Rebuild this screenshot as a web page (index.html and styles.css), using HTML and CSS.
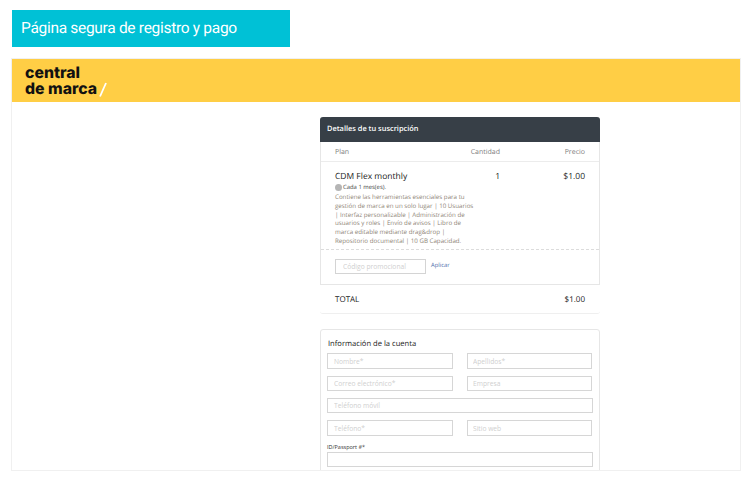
FILE: index.html
```html
<!DOCTYPE html>
<html lang="es">
<head>
<meta charset="utf-8">
<title>Página segura de registro y pago</title>
<link rel="stylesheet" href="styles.css">
</head>
<body>
<h1 class="banner">Página segura de registro y pago</h1>
<div class="shell">
  <header class="brand">
    <div class="logo">central<br>de marca<svg class="slash" viewBox="0 0 8 15" width="8" height="15" aria-hidden="true"><path d="M1 14.5 L7 1" stroke="#fff" stroke-width="1.8" fill="none"/></svg></div>
  </header>
  <main class="content">
    <section class="card summary">
      <h2 class="card-head">Detalles de tu suscripción</h2>
      <div class="row labels">
        <span class="col-plan">Plan</span>
        <span class="col-qty">Cantidad</span>
        <span class="col-price">Precio</span>
      </div>
      <div class="row item">
        <div class="col-plan">
          <div class="plan-name">CDM Flex monthly</div>
          <div class="cycle"><span class="dot"></span>Cada 1 mes(es).</div>
          <p class="desc">Contiene las herramientas esenciales para tu gestión de marca en un solo lugar | 10 Usuarios | Interfaz personalizable | Administración de usuarios y roles | Envío de avisos | Libro de marca editable mediante drag&amp;drop | Repositorio documental | 10 GB Capacidad.</p>
        </div>
        <div class="col-qty qty-val">1</div>
        <div class="col-price price-val">$1.00</div>
      </div>
      <div class="promo">
        <input class="promo-input" placeholder="Código promocional">
        <a class="apply" href="#">Aplicar</a>
      </div>
    </section>
    <div class="total">
      <span>TOTAL</span>
      <span>$1.00</span>
    </div>
    <section class="card account">
      <h3 class="account-title">Información de la cuenta</h3>
      <div class="fields">
        <div class="pair">
          <input class="field" placeholder="Nombre*">
          <input class="field" placeholder="Apellidos*">
        </div>
        <div class="pair">
          <input class="field short" placeholder="Correo electrónico*">
          <input class="field short" placeholder="Empresa">
        </div>
        <input class="field wide short" placeholder="Teléfono móvil">
        <div class="pair">
          <input class="field" placeholder="Teléfono*">
          <input class="field" placeholder="Sitio web">
        </div>
        <div>
          <label class="id-label" for="id-pass">ID/Passport #*</label>
          <input class="field wide short" id="id-pass">
        </div>
      </div>
    </section>
  </main>
</div>
</body>
</html>
```
FILE: styles.css
```css
* { box-sizing: border-box; }
html, body { margin: 0; height: 100%; overflow: hidden; background: #fff; }
body {
  padding: 10px 0 0 11px;
  font-family: "Open Sans", sans-serif;
  color: #222;
  text-rendering: geometricPrecision;
}

.banner {
  margin: 0 0 11px 1px;
  width: 278px;
  height: 37px;
  padding-left: 9px;
  background: #00c1d6;
  color: #fff;
  font: 400 15.5px/37px Roboto, sans-serif;
  letter-spacing: -0.3px;
}

.shell {
  width: 730px;
  height: 413px;
  border: 1px solid #f0f0f0;
  overflow: hidden;
  background: #fff;
}

.brand {
  height: 43px;
  padding: 6px 0 0 13px;
  background: #ffce45;
}
.logo {
  font: 800 15.8px/16px Inter, sans-serif;
  color: #111;
}
.slash { margin-left: 2px; vertical-align: -3px; }

.content {
  width: 280px;
  margin: 15px 0 0 308px;
}

.card {
  border: 1px solid #e6e6e6;
  background: #fff;
}
.summary { border-radius: 3px 3px 0 0; border-top: 0; height: 168px; }
.card-head {
  margin: 0 -1px;
  height: 25px;
  padding-left: 7px;
  background: #373f47;
  color: #fff;
  border-radius: 3px 3px 0 0;
  font: 600 7.4px/25px "Open Sans", sans-serif;
}

.row {
  display: flex;
  padding: 0 14px;
}
.col-plan { flex: none; width: 125px; }
.col-qty { flex: none; width: 40px; text-align: right; }
.col-price { flex: 1; text-align: right; }

.labels {
  height: 20px;
  padding-top: 1px;
  border-bottom: 1px solid #ececec;
  font-size: 7px;
  line-height: 20px;
  color: #808080;
}
.item {
  height: 88px;
  padding-top: 9px;
  border-bottom: 1px dashed #dcdcdc;
}
.plan-name { font-size: 8.5px; line-height: 12px; color: #222; white-space: nowrap; }
.qty-val, .price-val { font-size: 8.5px; line-height: 12px; color: #222; }
.cycle {
  display: flex;
  align-items: center;
  gap: 1px;
  font-size: 5.9px;
  line-height: 9px;
  color: #444;
}
.dot { width: 7px; height: 7px; border-radius: 50%; background: #b5b5b5; }
.desc {
  margin: 1px 0 0;
  width: 140px;
  font-size: 6.2px;
  line-height: 8.8px;
  color: #8f8678;
}

.promo {
  display: flex;
  align-items: flex-start;
  gap: 5px;
  padding: 9px 14px 0;
}
.promo-input {
  width: 91px;
  height: 15px;
  padding: 0 7px;
  border: 1px solid #d4d4d4;
  font: 6.7px "Open Sans", sans-serif;
  outline: 0;
}
.apply { margin-top: 1px; font-size: 5.8px; line-height: 11px; color: #4a6ea9; text-decoration: none; }

.total {
  display: flex;
  justify-content: space-between;
  height: 29px;
  padding: 0 15px;
  border-bottom: 1px solid #efefef;
  border-radius: 0 0 3px 3px;
  font-size: 8px;
  line-height: 30px;
  color: #222;
}

.account {
  margin-top: 15px;
  height: 160px;
  padding: 7px 6px 0;
  border-radius: 3px;
}
.account-title {
  margin: 1px 0 0 1px;
  font-size: 7.6px;
  font-weight: 400;
  line-height: 12px;
  color: #222;
}
.fields {
  display: flex;
  flex-direction: column;
  gap: 7px;
  margin-top: 3px;
}
.pair { display: flex; justify-content: space-between; width: 265px; }
.pair .field { width: 126px; }
.pair .field:last-child { width: 125px; padding-left: 5px; }
.field {
  display: block;
  height: 16px;
  padding: 0 6px;
  border: 1px solid #d6d6d6;
  background: #fff;
  font: 6.7px "Open Sans", sans-serif;
  outline: 0;
}
.field.short { height: 15px; }
.field.wide { width: 266px; }
input::placeholder { color: #cfcfcf; opacity: 1; }
.id-label {
  display: block;
  font-size: 5.5px;
  line-height: 9px;
  color: #333;
}
```
